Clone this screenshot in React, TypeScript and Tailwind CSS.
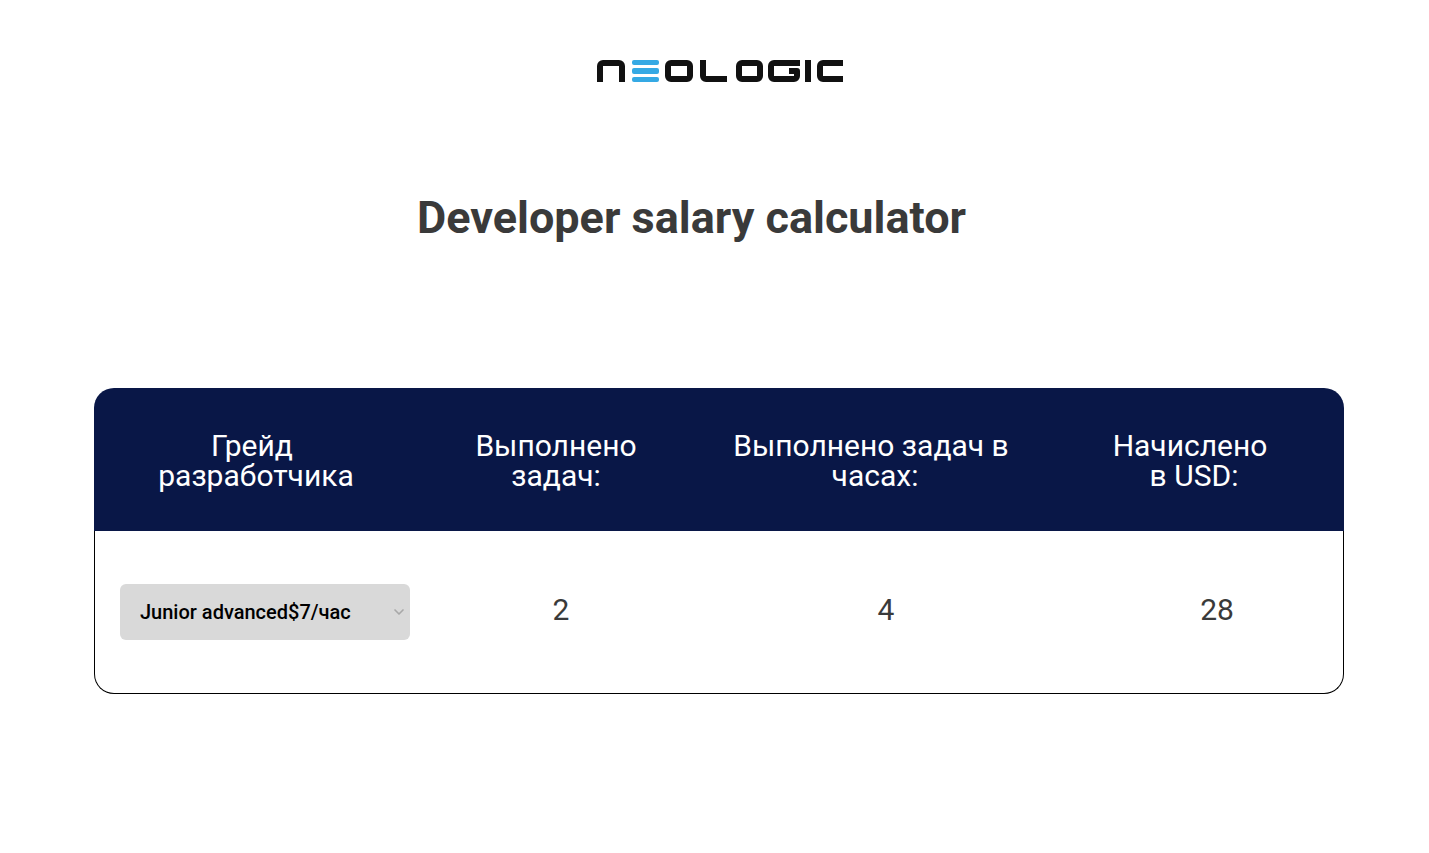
import { ChevronDown } from "lucide-react";

function Logo() {
  return (
    <svg width="247" height="22" viewBox="0 0 247 22" fill="none" className="block blur-[0.4px]">
      <g stroke="#111" strokeWidth="6" strokeLinejoin="round">
        {/* n */}
        <path d="M4 22V6a3 3 0 0 1 3-3h16a3 3 0 0 1 3 3v16" />
        {/* o */}
        <rect x="72" y="3" width="22" height="16" rx="3" />
        {/* l */}
        <path d="M107 0v16a3 3 0 0 0 3 3h21" />
        {/* o */}
        <rect x="143" y="3" width="21" height="16" rx="3" />
        {/* g */}
        <path d="M204 3h-26a3 3 0 0 0-3 3v10a3 3 0 0 0 3 3h20a3 3 0 0 0 3-3v-5h-8" />
        {/* i */}
        <path d="M212 0v22" />
        {/* c */}
        <path d="M247 3h-20a3 3 0 0 0-3 3v10a3 3 0 0 0 3 3h20" />
      </g>
      {/* e */}
      <g fill="#35a9e4">
        <rect x="36" y="0" width="27" height="5" rx="2" />
        <rect x="36" y="8" width="27" height="6" rx="2" />
        <rect x="36" y="17" width="27" height="5" rx="2" />
      </g>
    </svg>
  );
}

export default function App() {
  return (
    <div className="min-h-[853px] bg-white font-['Roboto',sans-serif] text-[#3a3a3a]">
      <div className="flex justify-center pt-[60px] pl-[10px]">
        <Logo />
      </div>

      <h1 className="mt-[108px] text-center text-[45px] leading-[56px] font-bold pr-[46px]">
        Developer salary calculator
      </h1>

      <div className="ml-[94px] mt-[142px] w-[1250px]">
        {/* Header */}
        <div className="flex h-[143px] items-center rounded-t-[20px] bg-[#091747] pt-[2px] text-center text-[30px] leading-[30px] text-white">
          <div className="w-[324px]">
            <span className="mr-2">Грейд</span>
            <br />
            разработчика
          </div>
          <div className="w-[276px]">
            Выполнено
            <br />
            задач:
          </div>
          <div className="w-[354px]">
            Выполнено задач в
            <br />
            <span className="ml-2">часах:</span>
          </div>
          <div className="w-[284px]">
            Начислено
            <br />
            <span className="ml-2">в USD:</span>
          </div>
        </div>

        {/* Row */}
        <div className="flex h-[163px] items-center rounded-b-[20px] border-x border-b border-black pl-[25px] text-center text-[30px] leading-[36px]">
          <div className="relative h-[56px] w-[290px] shrink-0">
            <select className="h-full w-full appearance-none rounded-[6px] bg-[#d9d9d9] pl-[20px] text-[20px] font-medium text-black outline-none">
              <option>Junior advanced$7/час</option>
              <option>Middle$10/час</option>
              <option>Senior$15/час</option>
            </select>
            <ChevronDown className="pointer-events-none absolute right-[3px] top-[20px] h-[16px] w-[16px] text-[#a8a8a8]" strokeWidth={2.5} />
          </div>
          <div className="w-[302px] -mt-[4px]">2</div>
          <div className="w-[348px] -mt-[4px]">4</div>
          <div className="ml-[32px] w-[250px] -mt-[4px]">28</div>
        </div>
      </div>
    </div>
  );
}
